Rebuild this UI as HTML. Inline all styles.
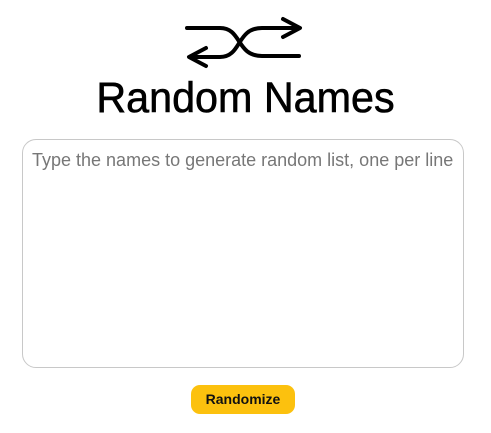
<!DOCTYPE html>
<html><head><style>
html,body{margin:0;padding:0;background:#fff;width:491px;height:433px;overflow:hidden;font-family:"Liberation Sans",sans-serif}
.icon{position:absolute;left:0;top:0}
h1{position:absolute;left:0;width:491px;top:75px;margin:0;text-align:center;font-family:"Liberation Sans",sans-serif;font-weight:normal;font-size:43px;line-height:46px;color:#000;transform:scaleX(0.96);-webkit-text-stroke:0.6px #000}
.ta{position:absolute;left:22px;top:139px;width:440px;height:227px;border:1px solid #c8c8c8;border-radius:14px;box-sizing:content-box}
.ph{position:absolute;left:32px;top:150px;font-size:18px;color:#777;white-space:nowrap}
.btn{position:absolute;left:191px;top:385px;width:104px;height:29px;background:#fcc10e;border-radius:9px;text-align:center;line-height:29px;font-weight:bold;font-size:14px;color:#111}
</style></head><body>
<svg class="icon" width="491" height="80" viewBox="0 0 491 80">
<g fill="none" stroke="#000" stroke-width="4" stroke-linecap="round" stroke-linejoin="round">
<path d="M187 28 H220 C242 28 236 56 262 56 H299"/>
<path d="M190 57 H220 C242 57 236 28 262 28 H299"/>
<path d="M283 19 L300 28 L283 37"/>
<path d="M206 48 L189 57 L206 66"/>
</g></svg>
<h1>Random Names</h1>
<div class="ta"></div>
<div class="ph">Type the names to generate random list, one per line</div>
<div class="btn">Randomize</div>
</body></html>
